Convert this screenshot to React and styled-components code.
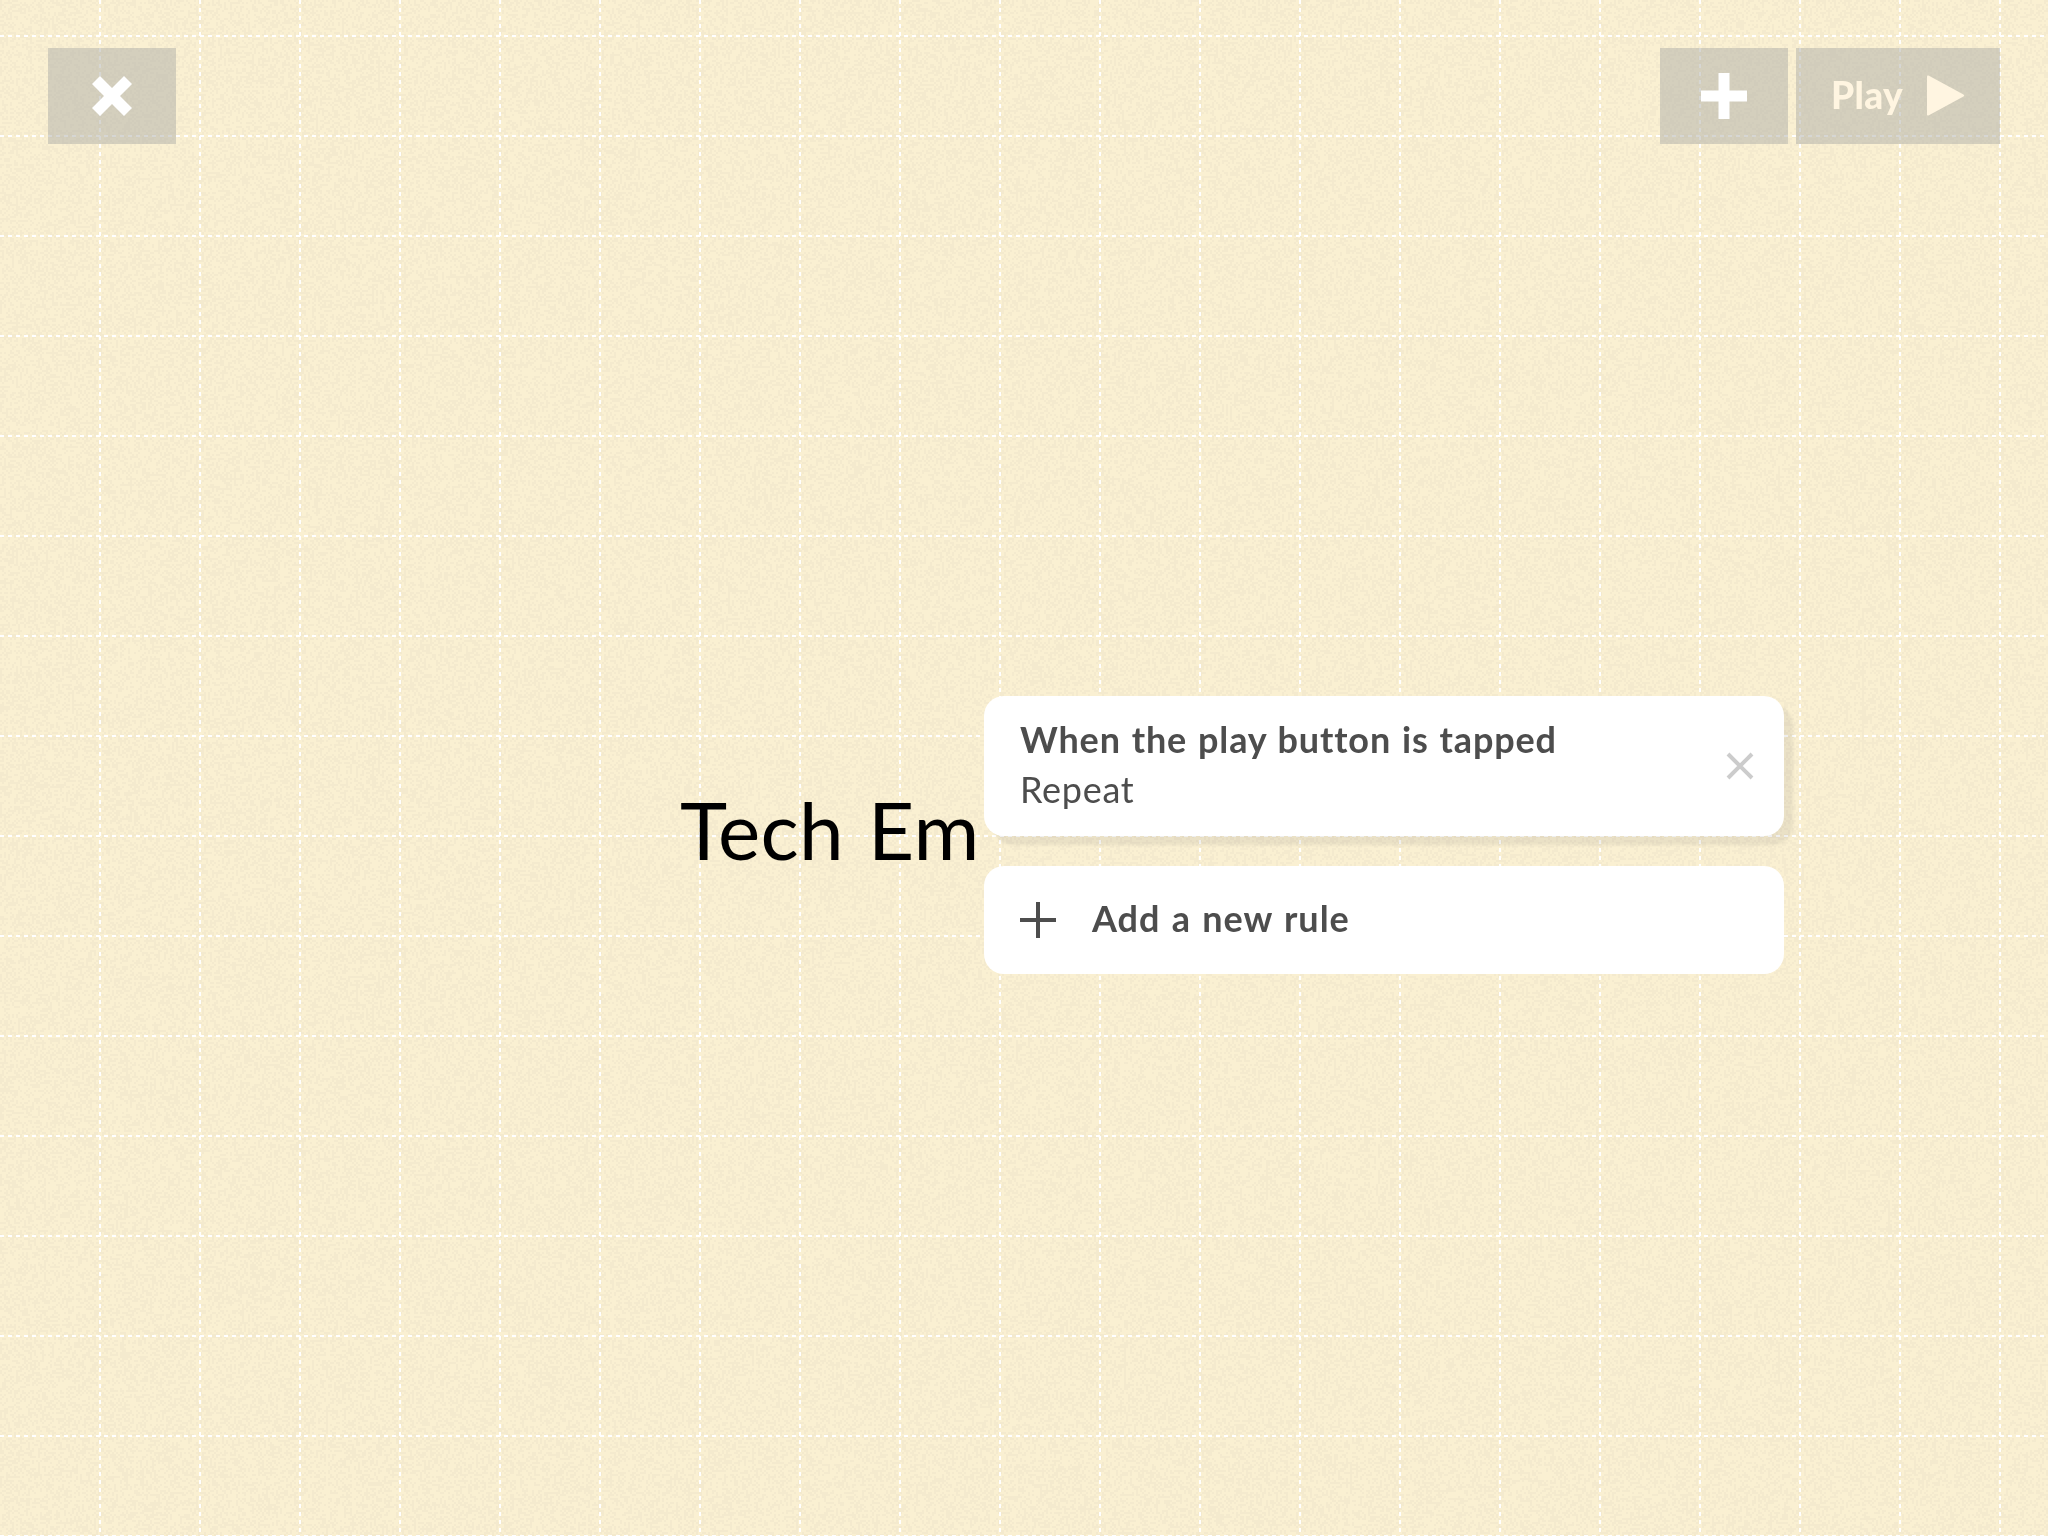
import React, { useEffect, useRef } from "react";
import styled, { createGlobalStyle } from "styled-components";

const GlobalStyle = createGlobalStyle`
  * { box-sizing: border-box; }
  html, body { margin: 0; padding: 0; }
  body { font-family: Lato, "Open Sans", sans-serif; overflow: hidden; }
`;

const Stage = styled.main`
  position: relative;
  width: 2048px;
  height: 1536px;
  overflow: hidden;
  background: #faf0d2;
`;

const PaperCanvas = styled.canvas`
  position: absolute;
  inset: 0;
  width: 2048px;
  height: 1536px;
`;

const Toolbar = styled.header`
  position: relative;
  display: flex;
  justify-content: space-between;
  padding: 48px 48px 0;
`;

const ToolGroup = styled.div`
  display: flex;
  gap: 8px;
`;

const ToolButton = styled.button`
  display: flex;
  align-items: center;
  justify-content: center;
  gap: 24px;
  width: ${(p) => p.$width}px;
  height: 96px;
  padding: 0;
  border: 0;
  background: rgba(173, 173, 167, 0.5);
  color: #fff5e1;

  svg { display: block; }
`;

const PlayLabel = styled.span`
  font: 900 37px/44px Lato, sans-serif;
  letter-spacing: 0.3px;
  padding-bottom: 3px;
`;

const TextObject = styled.div`
  position: absolute;
  left: 680px;
  top: 779px;
  font: 400 80px/100px Lato, sans-serif;
  letter-spacing: 0.4px;
  word-spacing: 3px;
  white-space: nowrap;
  color: #000;
`;

const RulePanel = styled.section`
  position: absolute;
  left: 984px;
  top: 696px;
  width: 800px;
  display: flex;
  flex-direction: column;
  gap: 30px;
  color: #4d4d4d;
`;

const Card = styled.div`
  display: flex;
  align-items: center;
  height: ${(p) => p.$height}px;
  padding: 0 30px 0 36px;
  gap: 36px;
  border-radius: 20px;
  background: #fff;
  box-shadow: ${(p) => (p.$raised ? "9px 9px 3px rgba(77, 77, 77, 0.09)" : "none")};
`;

const RuleText = styled.div`
  flex: 1;
  padding-bottom: 5px;
`;

const Line = styled.div`
  font: ${(p) => (p.$strong ? 700 : 400)} 36px/50px Lato, sans-serif;
  letter-spacing: ${(p) => (p.$strong ? 0.85 : 0.7)}px;
  word-spacing: 1.3px;
  white-space: nowrap;
`;

const AddLabel = styled(Line)`
  padding-bottom: 4px;
  letter-spacing: 1px;
  word-spacing: 1.5px;
`;

const CELL = 2;
const GRID = 100;
const DASH = 4;

function Paper() {
  const ref = useRef(null);
  useEffect(() => {
    const canvas = ref.current;
    const ctx = canvas.getContext("2d");
    const w = canvas.width / CELL;
    const h = canvas.height / CELL;

    const grain = document.createElement("canvas");
    grain.width = w;
    grain.height = h;
    const grainCtx = grain.getContext("2d");
    const img = grainCtx.createImageData(w, h);
    let seed = 7;
    for (let i = 0; i < w * h; i++) {
      seed = (seed * 1664525 + 1013904223) >>> 0;
      const dark = seed / 4294967296 < 0.42;
      img.data[i * 4] = dark ? 244 : 250;
      img.data[i * 4 + 1] = dark ? 234 : 240;
      img.data[i * 4 + 2] = dark ? 206 : 210;
      img.data[i * 4 + 3] = 255;
    }
    grainCtx.putImageData(img, 0, 0);
    ctx.imageSmoothingEnabled = false;
    ctx.drawImage(grain, 0, 0, canvas.width, canvas.height);

    ctx.fillStyle = "#fff";
    for (let y = 35; y < canvas.height; y += GRID)
      for (let x = 0; x < canvas.width; x += DASH * 2) ctx.fillRect(x, y, DASH, 2);
    for (let x = 99; x < canvas.width; x += GRID)
      for (let y = 0; y < canvas.height; y += DASH * 2) ctx.fillRect(x, y, 2, DASH);
  }, []);
  return <PaperCanvas ref={ref} width={2048} height={1536} />;
}

export default function App() {
  return (
    <>
      <GlobalStyle />
      <Stage>
        <Paper />
        <Toolbar>
          <ToolButton $width={128} aria-label="Close">
            <svg width="40" height="40" viewBox="0 0 40 40" fill="#fff">
              <path d="M8 0 20 12 32 0 40 8 28 20 40 32 32 40 20 28 8 40 0 32 12 20 0 8Z" />
            </svg>
          </ToolButton>
          <ToolGroup>
            <ToolButton $width={128} aria-label="Add">
              <svg width="46" height="46" viewBox="0 0 46 46" fill="#fff">
                <path d="M17.5 0h11v17.5H46v11H28.500V46h-11V28.500H0v-11h17.500Z" />
              </svg>
            </ToolButton>
            <ToolButton $width={204}>
              <PlayLabel>Play</PlayLabel>
              <svg width="38" height="42" viewBox="0 0 38 42" fill="#fff5e1">
                <path d="M0 1.500Q0 0 1.500.600L36.500 19.500Q38 20.500 36.500 21.500L1.500 40.400Q0 41 0 39.500Z" />
              </svg>
            </ToolButton>
          </ToolGroup>
        </Toolbar>
        <TextObject>Tech Em</TextObject>
        <RulePanel>
          <Card $height={140} $raised>
            <RuleText>
              <Line $strong>When the play button is tapped</Line>
              <Line>Repeat</Line>
            </RuleText>
            <svg width="28" height="28" viewBox="0 0 28 28" stroke="#ccc" strokeWidth="4">
              <path d="M2 2 26 26M26 2 2 26" />
            </svg>
          </Card>
          <Card $height={108}>
            <svg width="36" height="36" viewBox="0 0 36 36" fill="#4d4d4d">
              <path d="M16 0h4v16h16v4H20v16h-4V20H0v-4h16Z" />
            </svg>
            <AddLabel $strong>Add a new rule</AddLabel>
          </Card>
        </RulePanel>
      </Stage>
    </>
  );
}
